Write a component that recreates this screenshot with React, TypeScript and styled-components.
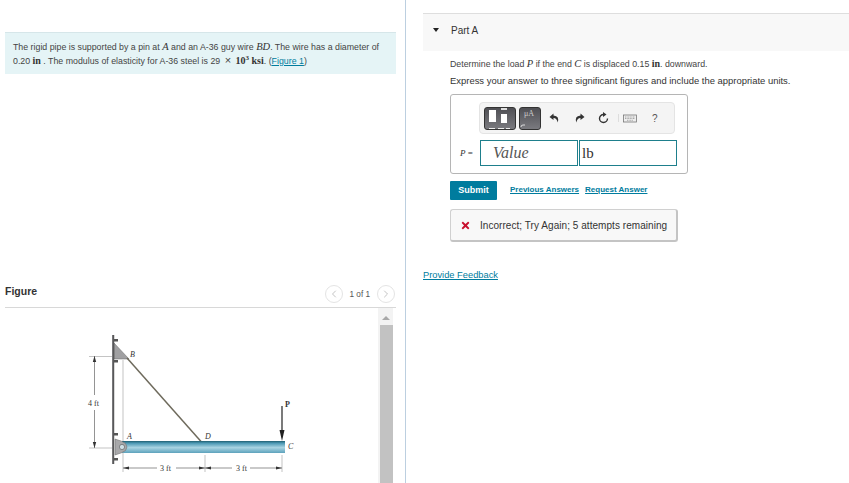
import React from "react";
import styled, { createGlobalStyle } from "styled-components";
import { FaTimes } from "react-icons/fa";
import { ChevronLeft, ChevronRight } from "lucide-react";

const GlobalStyle = createGlobalStyle`
  html, body { margin: 0; padding: 0; background: #fff; }
  body { font-family: "Liberation Sans", Arial, sans-serif; color: #333; overflow: hidden; }
`;

const Page = styled.div`
  display: flex;
  width: 849px;
  height: 483px;
  overflow: hidden;
`;

const LeftColumn = styled.div`
  width: 391px;
  height: 483px;
  border-right: 1px solid #bccfe0;
  display: flex;
  flex-direction: column;
  padding: 32px 9px 0 5px;
  box-sizing: content-box;
  flex: none;
`;

const RightColumn = styled.div`
  flex: 1;
  padding: 13px 0 0 17px;
  min-width: 0;
`;

const Intro = styled.div`
  background: #e5f4f6;
  border-top: 1px solid #d6e6e9;
  height: 42px;
  padding: 8px 8px 0;
  box-sizing: border-box;
  font-size: 8.8px;
  line-height: 12.5px;
  color: #444;
  white-space: nowrap;
`;

const MathVar = styled.i`
  font-family: "Liberation Serif", serif;
  font-size: 10.5px;
  color: #333;
`;

const MathUnit = styled.b`
  font-family: "Liberation Serif", serif;
  font-size: 10px;
  color: #333;
`;

const Times = styled.span`
  font-size: 11px;
  margin: 0 2px;
`;

const Sup = styled.sup`
  font-size: 7px;
  line-height: 0;
  font-family: "Liberation Serif", serif;
  font-weight: bold;
`;

const TextLink = styled.a`
  color: #007c9e;
  text-decoration: underline;
`;

const FigureHeader = styled.div`
  margin-top: 210px;
  height: 24px;
  box-sizing: border-box;
  border-bottom: 1px solid #d8d8d8;
  display: flex;
  align-items: flex-start;
  justify-content: space-between;
  flex: none;
`;

const FigureTitle = styled.span`
  font-size: 10.5px;
  font-weight: bold;
  color: #333;
  line-height: 14px;
`;

const Pager = styled.div`
  display: flex;
  align-items: center;
  gap: 7px;
  font-size: 8.2px;
  color: #555;
  margin: 1px 1px 0 0;
`;

const PagerButton = styled.span`
  width: 18px;
  height: 18px;
  border: 1px solid #e4e4e4;
  border-radius: 50%;
  box-sizing: border-box;
  display: flex;
  align-items: center;
  justify-content: center;
  color: #c4c4c4;
`;

const FigureBody = styled.div`
  display: flex;
  flex: 1;
  min-height: 0;
  overflow: hidden;
`;

const FigureDrawing = styled.svg`
  display: block;
  width: 373px;
  height: 176px;
  flex: none;
`;

const ScrollTrack = styled.div`
  width: 15px;
  background: #f3f3f3;
  display: flex;
  flex-direction: column;
  align-items: flex-end;
  flex: none;
`;

const ScrollArrow = styled.span`
  margin: 8px 3px 0 0;
  width: 0;
  height: 0;
  border-left: 4px solid transparent;
  border-right: 4px solid transparent;
  border-bottom: 4px solid #a8a8a8;
`;

const ScrollThumb = styled.div`
  width: 13px;
  flex: 1;
  margin-top: 5px;
  background: #c2c2c2;
`;

const PartBar = styled.div`
  height: 38px;
  box-sizing: border-box;
  background: #f8f8f8;
  border-top: 1px solid #dedede;
  display: flex;
  align-items: center;
  padding-left: 10px;
  padding-bottom: 5px;
  gap: 12px;
  font-size: 10px;
  color: #333;
`;

const Caret = styled.span`
  width: 0;
  height: 0;
  border-left: 3.5px solid transparent;
  border-right: 3.5px solid transparent;
  border-top: 4px solid #222;
`;

const PartBody = styled.div`
  padding: 7px 0 0 27px;
`;

const Question = styled.p`
  margin: 0;
  font-size: 8.8px;
  line-height: 12px;
  color: #444;
`;

const Instruction = styled.p`
  margin: 5px 0 0;
  font-size: 9.45px;
  line-height: 12px;
  color: #333;
`;

const AnswerBox = styled.div`
  margin-top: 7px;
  width: 238px;
  height: 80px;
  box-sizing: border-box;
  border: 1px solid #b5b5b5;
  border-radius: 3px;
  padding: 7px 11px 0 9px;
`;

const Toolbar = styled.div`
  margin-left: 19px;
  width: 196px;
  height: 32px;
  box-sizing: border-box;
  background: #f4f4f4;
  border: 1px solid #e4e4e4;
  border-radius: 4px;
  display: flex;
  align-items: center;
  padding-left: 4px;
  color: #333;
`;

const TemplateButton = styled.svg<{ $width: number }>`
  width: ${(p) => p.$width}px;
  height: 23px;
  flex: none;
  display: block;
  border-radius: 3px;
  margin-right: 3px;
  border: 1px solid #333;
  box-sizing: border-box;
  background: linear-gradient(#4f4f54, #7a7a7f);
`;

const ToolIcon = styled.svg<{ $left: number }>`
  margin-left: ${(p) => p.$left}px;
  flex: none;
  display: block;
`;

const ToolSeparator = styled.span`
  width: 1px;
  height: 8px;
  margin: 0 4px 0 9px;
  background: #ddd;
  flex: none;
`;

const HelpMark = styled.span`
  margin-left: 15px;
  font-size: 10px;
  color: #555;
`;

const InputRow = styled.div`
  display: flex;
  align-items: center;
  margin-top: 6px;
`;

const InputLabel = styled.span`
  width: 20px;
  flex: none;
  font-size: 9px;
  color: #333;
  font-family: "Liberation Serif", serif;
`;

const ValueField = styled.div`
  width: 98px;
  height: 26px;
  flex: none;
  box-sizing: border-box;
  border: 1px solid #1e7f8c;
  margin-right: 1px;
  display: flex;
  align-items: center;
  font-family: "Liberation Serif", serif;
  font-size: 16px;
  color: #555;
  padding-left: 12px;
  font-style: italic;
`;

const UnitField = styled(ValueField)`
  font-style: normal;
  color: #333;
  padding-left: 2px;
  font-size: 15px;
`;

const ActionRow = styled.div`
  margin-top: 7px;
  display: flex;
  align-items: center;
  height: 19px;
`;

const SubmitButton = styled.span`
  width: 47px;
  height: 19px;
  background: #007c9e;
  border-radius: 1px;
  color: #fff;
  font-size: 9px;
  font-weight: bold;
  text-align: center;
  line-height: 18px;
`;

const ActionLink = styled(TextLink)`
  font-size: 8px;
  font-weight: bold;
  margin-left: 13px;
  margin-bottom: 2px;
`;

const SecondLink = styled(ActionLink)`
  margin-left: 6px;
`;

const FeedbackBox = styled.div`
  margin-top: 9px;
  width: 228px;
  height: 33px;
  box-sizing: border-box;
  background: #f8f8f8;
  border: 1px solid #d0d0d0;
  border-bottom: 2px solid #c4c4c4;
  border-right: 2px solid #c4c4c4;
  border-radius: 3px;
  display: flex;
  align-items: center;
  padding-left: 9px;
  gap: 9px;
  font-size: 10px;
  letter-spacing: 0.05px;
  color: #333;
`;

const FeedbackLink = styled(TextLink)`
  display: block;
  margin: 28px 0 0 0;
  font-size: 9.3px;
`;

const PipeDrawing = () => (
  <FigureDrawing viewBox="5 0 373 176">
    <defs>
      <linearGradient id="pipe" x1="0" y1="0" x2="0" y2="1">
        <stop offset="0" stopColor="#1f5f70" />
        <stop offset="0.18" stopColor="#4b98b4" />
        <stop offset="0.55" stopColor="#a9d4e2" />
        <stop offset="1" stopColor="#5da2bc" />
      </linearGradient>
    </defs>
    {/* dimension lines */}
    <g stroke="#aaa" strokeWidth="0.7" fill="none">
      <line x1="89" y1="48.5" x2="113" y2="48.5" />
      <line x1="89" y1="140" x2="113" y2="140" />
      <line x1="123" y1="52" x2="123" y2="164" />
      <line x1="205" y1="147" x2="205" y2="164" />
      <line x1="282" y1="147" x2="282" y2="164" />
    </g>
    <g stroke="#666" strokeWidth="0.7">
      <line x1="94.5" y1="48" x2="94.5" y2="87" />
      <line x1="94.5" y1="102" x2="94.5" y2="140" />
      <line x1="123" y1="160" x2="157" y2="160" />
      <line x1="176" y1="160" x2="232" y2="160" />
      <line x1="250" y1="160" x2="282" y2="160" />
    </g>
    <g fill="#333">
      <polygon points="94.5,48 92.8,54 96.2,54" />
      <polygon points="94.5,140 92.8,134 96.2,134" />
      <polygon points="123,160 129,158.5 129,161.5" />
      <polygon points="205,160 199,158.5 199,161.5" />
      <polygon points="205,160 211,158.5 211,161.5" />
      <polygon points="282,160 276,158.5 276,161.5" />
    </g>
    {/* wall and brackets */}
    <polygon points="114,35 129,51 114,51" fill="#a0a0a2" stroke="#666" strokeWidth="0.5" />
    <rect x="112" y="27" width="2" height="129" fill="#77777a" />
    <rect x="113.4" y="27" width="0.8" height="129" fill="#444" />
    <g fill="#555">
      <rect x="114" y="31" width="4" height="2.5" />
      <rect x="114" y="52" width="4" height="2.5" />
      <rect x="114" y="125" width="4" height="2.5" />
      <rect x="114" y="150" width="4" height="2.5" />
    </g>
    {/* guy wire */}
    <line x1="127" y1="50" x2="205" y2="138" stroke="#6e6a5c" strokeWidth="1.5" />
    {/* pipe */}
    <rect x="122" y="133" width="163" height="12" fill="url(#pipe)" />
    <path d="M115 131 L121 133 Q127 135 127 139 Q127 143 121 145 L115 147 Z" fill="#a8a8aa" stroke="#666" strokeWidth="0.5" />
    <circle cx="122" cy="139" r="2.6" fill="#cfe0e6" stroke="#555" strokeWidth="0.6" />
    {/* load arrow */}
    <line x1="282" y1="98" x2="282" y2="124" stroke="#222" strokeWidth="1.2" />
    <polygon points="282,133 279.5,122 284.5,122" fill="#222" />
    <g fontFamily="'Liberation Serif', serif" fontSize="8" fill="#333">
      <text x="130" y="49" fontStyle="italic">B</text>
      <text x="127" y="131" fontStyle="italic">A</text>
      <text x="205" y="131" fontStyle="italic">D</text>
      <text x="288" y="141" fontStyle="italic">C</text>
      <text x="285" y="99" fontWeight="bold">P</text>
      <text x="88" y="98">4 ft</text>
      <text x="160" y="163">3 ft</text>
      <text x="236" y="163">3 ft</text>
    </g>
  </FigureDrawing>
);

const App = () => (
  <Page>
    <GlobalStyle />
    <LeftColumn>
      <Intro>
        The rigid pipe is supported by a pin at <MathVar>A</MathVar> and an A-36 guy wire{" "}
        <MathVar>BD</MathVar>. The wire has a diameter of
        <br />
        0.20 <MathUnit>in</MathUnit> . The modulus of elasticity for A-36 steel is 29 <Times>×</Times>{" "}
        <MathUnit>10<Sup>3</Sup> ksi</MathUnit>. (<TextLink>Figure 1</TextLink>)
      </Intro>
      <FigureHeader>
        <FigureTitle>Figure</FigureTitle>
        <Pager>
          <PagerButton><ChevronLeft size={12} /></PagerButton>
          1 of 1
          <PagerButton><ChevronRight size={12} /></PagerButton>
        </Pager>
      </FigureHeader>
      <FigureBody>
        <PipeDrawing />
        <ScrollTrack>
          <ScrollArrow />
          <ScrollThumb />
        </ScrollTrack>
      </FigureBody>
    </LeftColumn>
    <RightColumn>
      <PartBar>
        <Caret />
        Part A
      </PartBar>
      <PartBody>
        <Question>
          Determine the load <MathVar>P</MathVar> if the end <MathVar>C</MathVar> is displaced 0.15{" "}
          <MathUnit>in</MathUnit>. downward.
        </Question>
        <Instruction>Express your answer to three significant figures and include the appropriate units.</Instruction>
        <AnswerBox>
          <Toolbar>
            <TemplateButton $width={32} viewBox="0 0 30 21">
              <rect x="4" y="2" width="7" height="12" fill="#fff" />
              <rect x="16" y="0" width="6" height="2" fill="#ddd" />
              <rect x="16" y="6" width="6" height="9" fill="#fff" />
              <path d="M4 20.5 H10 M13 20.5 H19 M21 20.5 H25" stroke="#eee" strokeWidth="1" />
            </TemplateButton>
            <TemplateButton $width={22} viewBox="0 0 20 21">
              <text x="4" y="8" fontFamily="'Liberation Serif', serif" fontSize="8" fill="#ccc">μA</text>
              <path d="M1 19 Q1 17 3 17 H5" stroke="#ddd" strokeWidth="1" fill="none" />
            </TemplateButton>
            <ToolIcon $left={5} width="11" height="10" viewBox="0 0 11 10">
              <path d="M4.5 0.5 L0.5 4 L4.5 7 V5 Q8 5 8.5 9.5 Q11 3 4.5 2.5 Z" fill="#333" />
            </ToolIcon>
            <ToolIcon $left={14} width="11" height="10" viewBox="0 0 11 10">
              <path d="M6.5 0.5 L10.5 4 L6.5 7 V5 Q3 5 2.5 9.5 Q0 3 6.5 2.5 Z" fill="#333" />
            </ToolIcon>
            <ToolIcon $left={13} width="11" height="12" viewBox="0 0 11 12">
              <path d="M5.5 2.5 A4 4 0 1 0 9.5 6.5" fill="none" stroke="#333" strokeWidth="1.4" />
              <path d="M5 0 L8.5 2.5 L5 5 Z" fill="#333" />
            </ToolIcon>
            <ToolSeparator />
            <ToolIcon $left={0} width="14" height="9" viewBox="0 0 14 9">
              <rect x="0.5" y="1" width="13" height="7" fill="#eee" stroke="#777" strokeWidth="0.8" />
              <path d="M2 3 H12 M2 4.5 H12 M4 6.3 H10" stroke="#888" strokeWidth="0.7" strokeDasharray="1 0.6" />
            </ToolIcon>
            <HelpMark>?</HelpMark>
          </Toolbar>
          <InputRow>
            <InputLabel><i>P</i> =</InputLabel>
            <ValueField>Value</ValueField>
            <UnitField>lb</UnitField>
          </InputRow>
        </AnswerBox>
        <ActionRow>
          <SubmitButton>Submit</SubmitButton>
          <ActionLink>Previous Answers</ActionLink>
          <SecondLink>Request Answer</SecondLink>
        </ActionRow>
        <FeedbackBox>
          <FaTimes size={11} color="#c8102e" />
          Incorrect; Try Again; 5 attempts remaining
        </FeedbackBox>
      </PartBody>
      <FeedbackLink>Provide Feedback</FeedbackLink>
    </RightColumn>
  </Page>
);

export default App;
